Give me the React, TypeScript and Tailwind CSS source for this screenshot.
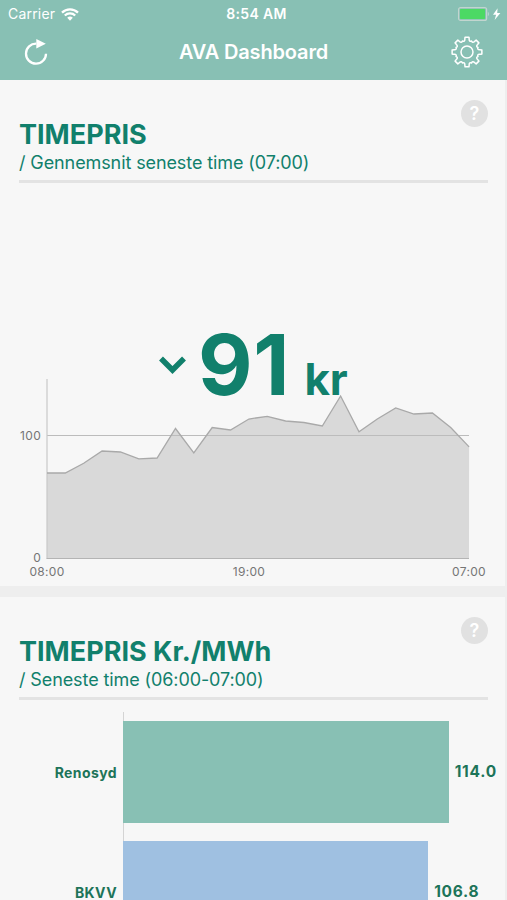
import type { ReactNode } from 'react';

const history = [
  69.5, 69.5, 77.4, 87.4, 86.6, 81, 81.7, 105.7, 85.8, 106.5, 104.5, 113.4,
  115.6, 111.8, 110.6, 107.7, 132.1, 102.9, 113.4, 122.4, 117.5, 118.3, 106.5, 90.7,
];

const prices = [
  { name: 'Renosyd', value: 114.0, color: 'bg-[#88c0b4]' },
  { name: 'BKVV', value: 106.8, color: 'bg-[#9fc0e1]' },
];

// Outline of an eight-toothed gear with flat tips and rounded valleys
function gearPath() {
  const at = (radius: number, degrees: number) => {
    const a = ((degrees - 90) * Math.PI) / 180;
    return `${(16 + radius * Math.cos(a)).toFixed(2)} ${(16 + radius * Math.sin(a)).toFixed(2)}`;
  };
  let d = `M${at(15, -7.5)}`;
  for (let i = 0; i < 8; i++) {
    const c = i * 45;
    d += ` L${at(15, c + 7.5)}`;
    d += ` Q${at(14.4, c + 8.5)} ${at(13, c + 9.5)}`;
    d += ` C${at(11, c + 11)} ${at(10.8, c + 17)} ${at(11.9, c + 22.5)}`;
    d += ` C${at(10.8, c + 28)} ${at(11, c + 34)} ${at(13, c + 35.5)}`;
    d += ` Q${at(14.4, c + 36.5)} ${at(15, c + 37.5)}`;
  }
  return d + 'Z';
}

function StatusBar() {
  return (
    <div className="flex h-7 items-center pl-2 pr-1 text-[14px] leading-none text-white">
      <div className="flex flex-1 items-center gap-1.5">
        <span className="tracking-[0.2px]">Carrier</span>
        <svg className="h-[13px] w-[18px]" viewBox="0 0 18 13" fill="none" stroke="currentColor" strokeWidth="2.3">
          <path d="M1 4.6a11.5 11.5 0 0 1 16 0M3.8 7.5a7.5 7.5 0 0 1 10.4 0" />
          <path d="M9 12.7 6.2 9.8a4 4 0 0 1 5.6 0Z" fill="currentColor" stroke="none" />
        </svg>
      </div>
      <span className="pl-0.5 text-[14px] font-semibold tracking-[0.35px]">8:54 AM</span>
      <div className="flex flex-1 items-center justify-end">
        <svg className="h-[14px] w-[45px]" viewBox="0 0 45 14">
          <rect x="0.6" y="0.6" width="28" height="12.8" rx="2" fill="none" stroke="#c2d5cf" strokeWidth="1.2" />
          <rect x="2" y="2" width="25" height="10" rx="0.8" fill="#4cd964" />
          <path d="M29.8 4.8c1.8.7 1.8 3.7 0 4.4Z" fill="#b4d5cd" />
          <path d="M39.6 1.2 35 7.8h3.1L36.6 13 42.4 6h-3.2Z" fill="#fff" />
        </svg>
      </div>
    </div>
  );
}

function NavBar() {
  return (
    <div className="flex h-[51px] items-center justify-between pb-1 pl-6 pr-6 text-white">
      <button aria-label="Opdater">
        <svg className="block h-7 w-6" viewBox="0 0 24 28" fill="none">
          <path d="M12.3 5.7A10 10 0 1 0 22 15.7" stroke="currentColor" strokeWidth="2.3" />
          <path d="M12.3 1 21.8 5.8 12.3 10.6Z" fill="currentColor" />
        </svg>
      </button>
      <h1 className="pl-2 text-[20px] font-semibold tracking-[-0.15px]">AVA Dashboard</h1>
      <button aria-label="Indstillinger">
        <svg className="block size-8" viewBox="0 0 32 32" fill="none" stroke="currentColor" strokeWidth="1.5">
          <path d={gearPath()} strokeLinejoin="round" />
          <circle cx="16" cy="16" r="6" />
        </svg>
      </button>
    </div>
  );
}

function Card({ title, subtitle, children }: { title: string; subtitle: string; children: ReactNode }) {
  return (
    <section className="h-[506px] w-[505px] shrink-0 bg-[#f7f7f7]">
      <div className="relative ml-[19px] h-[103px] w-[469px] border-b-[3px] border-[#e3e3e3] pt-[39px] text-[#11806c]">
        <h2 className="text-[27px] font-bold leading-8 tracking-[0px]">{title}</h2>
        <p className="text-[18px] leading-6 tracking-[-0.1px]">{subtitle}</p>
        <button className="absolute right-0 top-5 flex size-[27px] items-center justify-center rounded-full bg-[#e1e1e1] text-[18px] font-semibold leading-none text-white">
          ?
        </button>
      </div>
      {children}
    </section>
  );
}

function HistoryChart() {
  const line = history.map((v, i) => `${(47 + i * 18.35).toFixed(1)},${(375.5 - v * 1.23).toFixed(1)}`).join(' ');

  return (
    <svg className="block h-[403px] w-[505px]" viewBox="0 0 505 403">
      <polygon points={`47,375.5 ${line} 469,375.5`} fill="#d9d9d9" />
      <path d="M47 252.5H469" stroke="#bcbcbc" strokeWidth="1.2" />
      <path d="M47 196V375.5" stroke="#c8c8c8" strokeWidth="1.2" />
      <path d="M46.5 375.5H469" stroke="#b4b4b4" strokeWidth="1.2" />
      <polyline points={line} fill="none" stroke="#a9a9a9" strokeWidth="1.3" />
      <g fill="#757575" fontSize="12" letterSpacing="0.3">
        <text x="41" y="256.5" textAnchor="end">100</text>
        <text x="41" y="379" textAnchor="end">0</text>
        <g textAnchor="middle">
          <text x="47" y="392.5">08:00</text>
          <text x="249" y="392.5">19:00</text>
          <text x="469" y="392.5">07:00</text>
        </g>
      </g>
    </svg>
  );
}

function PriceBars() {
  return (
    <div className="mt-3 flex flex-col gap-[18px] bg-[linear-gradient(#d4d4d4,#d4d4d4)] bg-[length:1px_100%] bg-[position:123px_0] bg-no-repeat pt-[9px]">
      {prices.map((p) => (
        <div key={p.name} className="flex h-[102px] items-center text-[15.5px] font-bold text-[#1d7459]">
          <span className="w-[117px] text-right text-[14px] tracking-[0.4px]">{p.name}</span>
          <div className={`ml-1.5 mr-1.5 h-full ${p.color}`} style={{ width: p.value * 2.857 }} />
          <span className="tracking-[0.75px]">{p.value.toFixed(1)}</span>
        </div>
      ))}
    </div>
  );
}

export default function App() {
  return (
    <div className="h-[900px] w-[507px] overflow-hidden bg-[#eeeeee] font-['Inter',sans-serif]">
      <header className="h-20 bg-[#88c0b4]">
        <StatusBar />
        <NavBar />
      </header>
      <main className="flex flex-col gap-[11px]">
        <Card title="TIMEPRIS" subtitle="/ Gennemsnit seneste time (07:00)">
          <div className="relative">
            <HistoryChart />
            <div className="absolute left-[159px] top-[132px] flex items-baseline font-bold leading-[100px] text-[#11806c]">
              <svg className="mr-3 h-[18px] w-[27px] -translate-y-[21px]" viewBox="0 0 27 18" fill="none" stroke="currentColor" strokeWidth="5.5">
                <path d="M2 2.5 13.5 14 25 2.5" />
              </svg>
              <span className="text-[84px] tracking-[0.8px]">91</span>
              <span className="ml-[14px] text-[44px] tracking-[-0.2px]">kr</span>
            </div>
          </div>
        </Card>
        <Card title="TIMEPRIS Kr./MWh" subtitle="/ Seneste time (06:00-07:00)">
          <PriceBars />
        </Card>
      </main>
    </div>
  );
}
